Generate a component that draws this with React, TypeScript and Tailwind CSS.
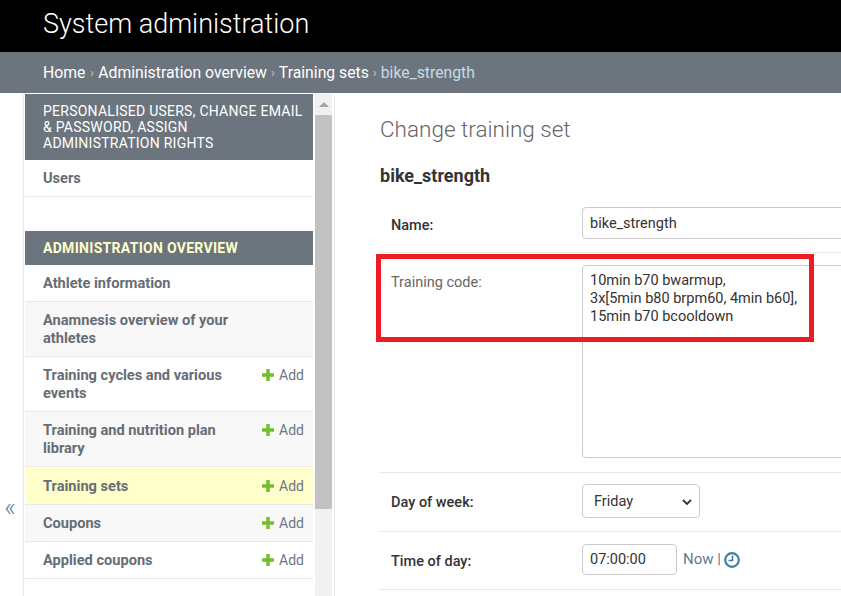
const rows = [
  { label: "Athlete information", bg: "bg-white", add: false },
  { label: "Anamnesis overview of your athletes", bg: "bg-[#f8f8f8]", add: false },
  { label: "Training cycles and various events", bg: "bg-white", add: true },
  { label: "Training and nutrition plan library", bg: "bg-[#f8f8f8] mb-px", add: true },
  { label: "Training sets", bg: "bg-[#ffffcc]", add: true },
  { label: "Coupons", bg: "bg-[#f8f8f8]", add: true },
  { label: "Applied coupons", bg: "bg-white", add: true },
];

function AddIcon() {
  return (
    <svg viewBox="0 0 12 12" className="mr-[5px] h-[12px] w-[12px] fill-[#70bf2b]">
      <path d="M4.3 0h3.4v4.3H12v3.4H7.7V12H4.3V7.7H0V4.3h4.3z" />
    </svg>
  );
}

function ClockIcon() {
  return (
    <svg viewBox="0 0 16 16" className="h-[16px] w-[16px] fill-none stroke-[#447e9b]">
      <circle cx="8" cy="8" r="6.8" strokeWidth="2.2" />
      <path d="M8.5 3.5v5H4.5" strokeWidth="1.6" />
    </svg>
  );
}

function NavRow({ label, bg, add }: { label: string; bg: string; add: boolean }) {
  return (
    <div className={`flex justify-between border-b border-[#e8e8e8] pl-[18px] pr-[9px] py-[9px] ${bg}`}>
      <span className="w-[200px] text-[14.6px] leading-[18px] font-bold text-[#666d75]">{label}</span>
      {add && (
        <span className="flex h-[18px] items-center text-[14px] text-[#6f767e]">
          <AddIcon />
          Add
        </span>
      )}
    </div>
  );
}

function Sidebar() {
  return (
    <div className="flex h-full shrink-0">
      <div className="flex w-[23px] items-center justify-center pt-[325px] pr-[3px] text-[25px] font-light text-[#5a8298]">«</div>
      <div className="flex h-full w-[312px] border-x border-[#eaeaea] pl-[1px]">
        <div className="w-[288px]">
          <div className="bg-[#6c757d] pl-[18px] pr-[8px] py-[9px] text-[14px] leading-[16px] tracking-[0.25px] text-white">
            PERSONALISED USERS, CHANGE EMAIL &amp; PASSWORD, ASSIGN ADMINISTRATION RIGHTS
          </div>
          <div className="border-b border-[#e8e8e8] bg-white pl-[18px] py-[9px] text-[14.6px] leading-[18px] font-bold text-[#666d75]">
            Users
          </div>
          <div className="h-[34px]" />
          <div className="bg-[#6c757d] pl-[18px] py-[9px] text-[14px] leading-[16px] font-bold tracking-[0.3px] text-[#ffffcc]">
            ADMINISTRATION OVERVIEW
          </div>
          {rows.map((r) => (
            <NavRow key={r.label} {...r} />
          ))}
        </div>
        <div className="ml-[2px] flex w-[17px] flex-col bg-[#f1f1f1]">
          <div className="flex h-[21px] items-center justify-center">
            <div className="h-0 w-0 border-x-[5px] border-b-[5px] border-x-transparent border-b-[#a3a3a3]" />
          </div>
          <div className="h-[394px] bg-[#c1c1c1]" />
        </div>
      </div>
    </div>
  );
}

function FormRow({ label, bold, className, labelClass, children }: { label: string; bold?: boolean; className: string; labelClass: string; children: React.ReactNode }) {
  return (
    <div className={`flex border-b border-[#e8e8e8] pl-[12px] ${className}`}>
      <div className={`w-[191px] shrink-0 text-[14.5px] leading-[18px] ${labelClass} ${bold ? "font-medium text-[#333333]" : "text-[#666666]"}`}>{label}</div>
      {children}
    </div>
  );
}

export default function App() {
  const field = "rounded-[4px] border border-[#cccccc] bg-white text-[14.5px] text-[#333333] outline-none";
  return (
    <div className="relative flex h-[596px] w-[841px] flex-col overflow-hidden bg-white font-['Roboto',sans-serif]">
      <div className="flex h-[52px] shrink-0 items-center bg-black pb-[4px] pl-[43px] text-[27px] font-light text-white">
        System administration
      </div>
      <div className="flex h-[41px] shrink-0 items-center bg-[#6c757d] pl-[43px] text-[15.75px] text-white">
        Home<span className="mx-[4.5px] text-[13px] text-[#ccc]">›</span>Administration overview<span className="mx-[4px] text-[13px] text-[#ccc]">›</span>Training sets<span className="mx-[4px] text-[13px] text-[#ccc]">›</span><span className="text-[#c4dce8]">bike_strength</span>
      </div>
      <div className="flex min-h-0 flex-1 pt-[1px]">
        <Sidebar />
        <div className="min-w-0 flex-1 pl-[44px] pt-[22px]">
          <h1 className="pl-px text-[22.5px] leading-[26px] font-light text-[#666666]">Change training set</h1>
          <h2 className="mt-[23px] pl-px text-[18px] leading-[22px] font-bold text-[#333333]">bike_strength</h2>
          <div className="mt-[8px] w-[600px]">
            <FormRow label="Name:" bold className="pt-[12px] pb-[13px]" labelClass="pt-[10px]">
              <input readOnly defaultValue="bike_strength" className={`h-[32px] w-full px-[7px] ${field}`} />
            </FormRow>
            <FormRow label="Training code:" className="pt-[12px] pb-[14px]" labelClass="pt-[9px]">
              <textarea readOnly defaultValue={"10min b70 bwarmup,\n3x[5min b80 brpm60, 4min b60],\n15min b70 bcooldown"} className={`block h-[193px] w-full resize-none px-[7px] pt-[6px] leading-[18px] ${field}`} />
            </FormRow>
            <FormRow label="Day of week:" bold className="pt-[11px] pb-[13px]" labelClass="pt-[10px]">
              <div className="relative h-[34px] w-[118px]">
                <select defaultValue="Friday" className={`h-full w-full appearance-none pl-[11px] pt-[1px] ${field}`}>
                  <option>Friday</option>
                </select>
                <svg viewBox="0 0 10 6" className="absolute top-[15px] left-[100px] h-[6px] w-[10px] fill-none stroke-[#333333]">
                  <path d="M1 1l4 4 4-4" strokeWidth="1.8" />
                </svg>
              </div>
            </FormRow>
            <FormRow label="Time of day:" bold className="pt-[12px] pb-[14px]" labelClass="pt-[9px]">
              <div className="flex items-center">
                <input readOnly defaultValue="07:00:00" className={`h-[31px] w-[95px] px-[7px] ${field}`} />
                <span className="ml-[6px] text-[15px] text-[#5f7b8c]">Now |</span>
                <span className="ml-[3px]"><ClockIcon /></span>
              </div>
            </FormRow>
          </div>
        </div>
      </div>
      <div className="absolute top-[254px] left-[376px] h-[88px] w-[438px] border-[5px] border-[#ed1c24]" />
    </div>
  );
}
